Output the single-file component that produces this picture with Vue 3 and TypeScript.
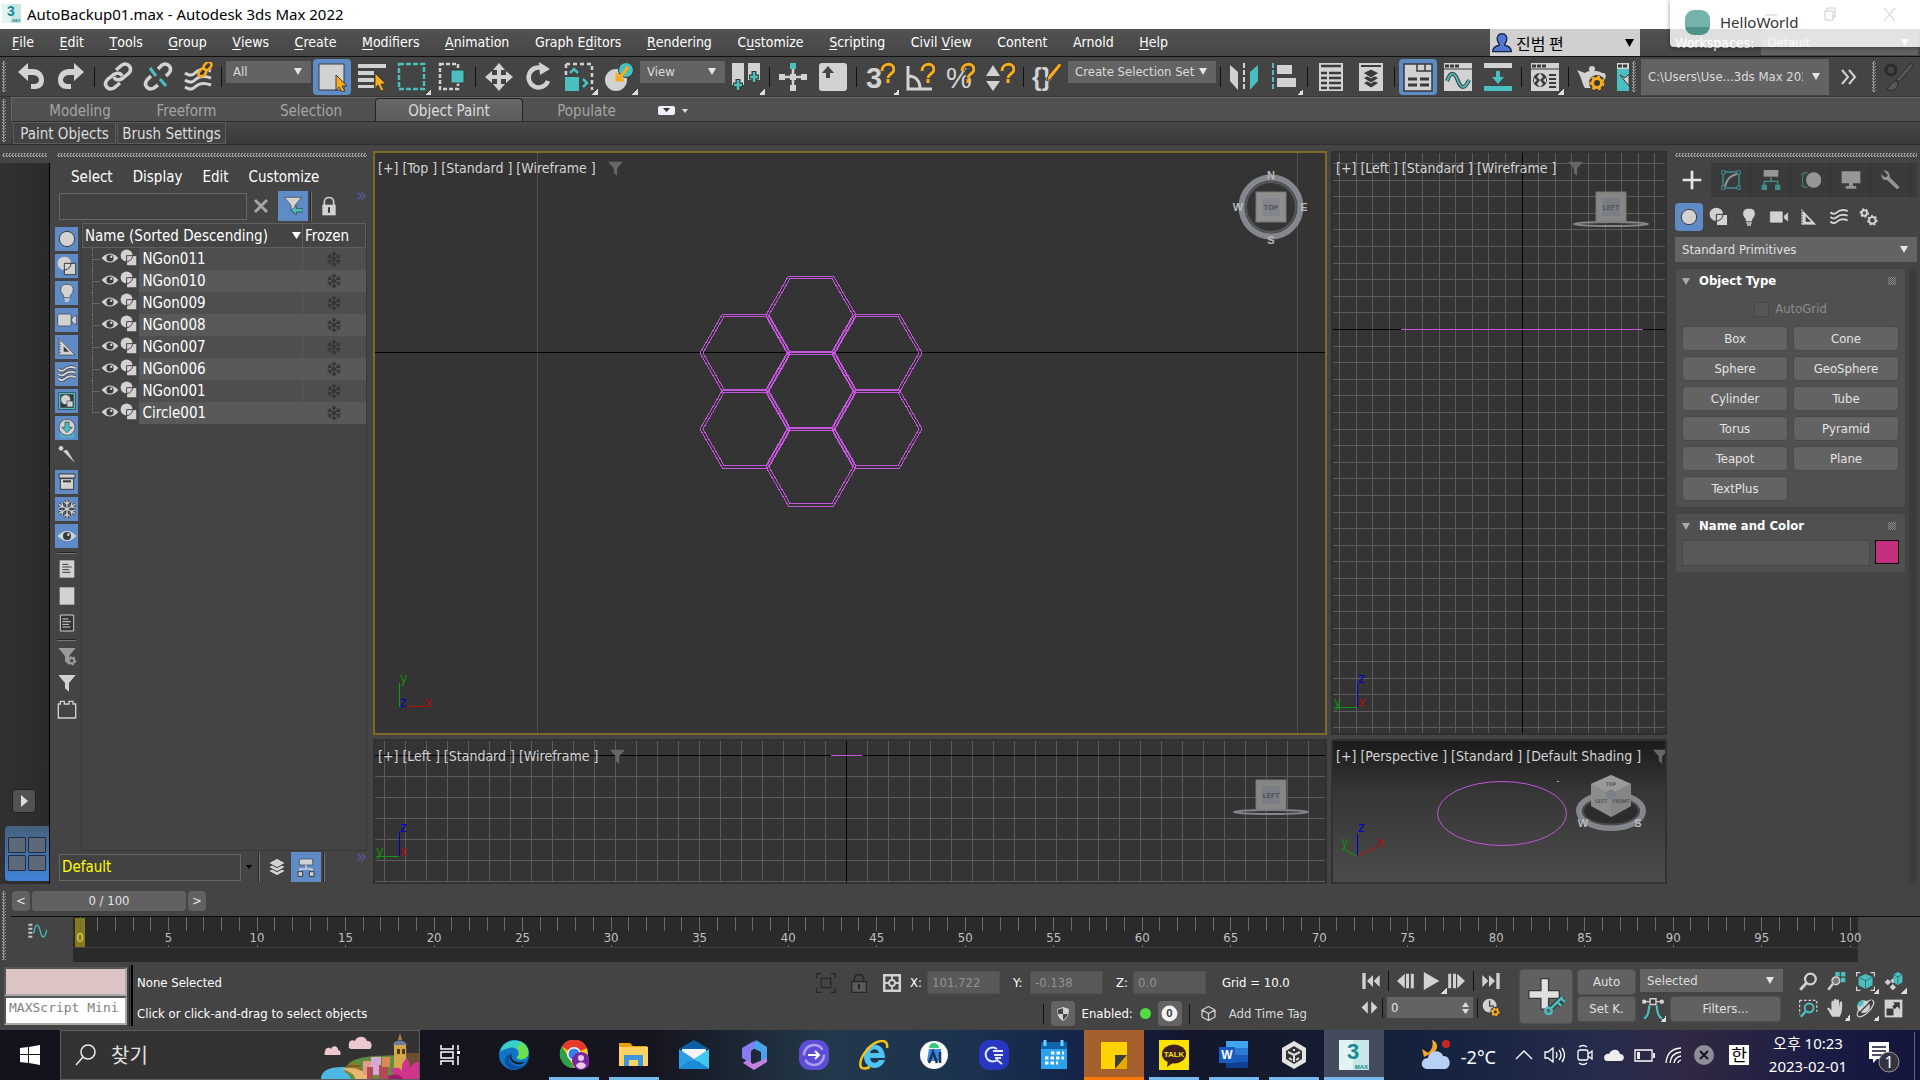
<script setup lang="ts">
import { computed, h, ref } from 'vue'
import type { FunctionalComponent } from 'vue'

const L = '#d2d2d2'
const T = '#49bfbf'
const Y = '#f9ac1c'
const D = '#3a3a3a'

const waves = (c: string) =>
  [8, 15, 22].map(y => `<path d="M2 ${y}c4 3 7 3 10 0s8-5 16-2" fill="none" stroke="${c}" stroke-width="3"/>`).join('')
const magnet = `<path d="M17 9c0-8 11-9 12-2 0 5-6 5-6 9" fill="none" stroke="${D}" stroke-width="5"/><path d="M17 9c0-8 11-9 12-2 0 5-6 5-6 9" fill="none" stroke="${Y}" stroke-width="3"/><path d="M23 17v4" stroke="${Y}" stroke-width="3"/>`
const gearAt = (x: number, y: number, r: number, c: string) =>
  `<circle cx="${x}" cy="${y}" r="${r}" fill="none" stroke="${c}" stroke-width="3"/><circle cx="${x}" cy="${y}" r="${r + 2}" fill="none" stroke="${c}" stroke-width="2" stroke-dasharray="3 3"/>`
const flake = (c: string, w: number) =>
  `<g fill="none" stroke="${c}" stroke-width="${w}">${[0, 60, 120, 180, 240, 300]
    .map(a => `<path transform="rotate(${a} 15 15)" d="M15 15V1M11 4l4 4 4-4"/>`).join('')}</g>`
const eye = `<path d="M1 15Q15 0 29 15Q15 30 1 15Z" fill="${L}"/><circle cx="15" cy="15" r="6" fill="${D}"/><circle cx="17" cy="13" r="2" fill="${L}"/>`
const shapes = `<circle cx="11" cy="11" r="10" fill="${L}"/><path d="M11 11h17v17H11z" fill="${L}" stroke="${D}" stroke-width="1.5"/><path d="M21 11a10 10 0 0 1-10 10" fill="none" stroke="${D}" stroke-width="1.5"/>`
const funnel = (c: string) => `<path d="M2 3h26L18 15v13l-6-5v-8Z" fill="${c}"/>`
const layers = (c: string) =>
  [21, 15, 9].map(y => `<path d="M15 ${y - 7}l13 7-13 7-13-7Z" fill="${c}" stroke="${D}" stroke-width="1.5"/>`).join('')
const tri = (x: number, dir: number) => `<path d="M${x} 15l${dir * 9} -9v18Z" fill="${L}"/>`

const icons: Record<string, string> = {
  undo: `<path d="M2 10l10-9v6h5c7 0 11 5 11 11s-4 9-9 9h-4v-5h3c3 0 5-2 5-4s-2-5-6-5h-5v6Z" fill="${L}"/>`,
  redo: `<path d="M28 10L18 1v6h-5C6 7 2 12 2 18s4 9 9 9h4v-5h-3c-3 0-5-2-5-4s2-5 6-5h5v6Z" fill="${L}"/>`,
  link: `<g fill="none" stroke="${L}" stroke-width="3.5"><path d="M13 8l6-5c6-3 11 3 7 8l-6 5c-4 3-8 2-9-1"/><path d="M17 21l-6 5c-6 3-11-3-7-8l6-5c4-3 8-2 9 1"/></g>`,
  unlink: `<g fill="none" stroke="${L}" stroke-width="3.5"><path d="M15 7l4-4c6-3 11 3 7 8l-3 3"/><path d="M15 23l-4 3c-6 3-11-3-7-8l4-4"/></g><path d="M7 6l6 8M17 17l6 7" stroke="${T}" stroke-width="3"/>`,
  bind: `<g transform="translate(0 3)">${waves(L)}</g><g fill="none" stroke="${D}" stroke-width="6"><path d="M19 12l6-7"/></g><g fill="none" stroke="${Y}" stroke-width="2.5"><rect x="15" y="8" width="9" height="6" rx="3" transform="rotate(-50 19 11)"/><rect x="21" y="1" width="9" height="6" rx="3" transform="rotate(-50 25 5)"/></g>`,
  select: `<path d="M2 2h25v26H2z" fill="${L}" stroke="${D}"/><path d="M19 13l11 11h-5l3 5-3 1-3-5-3 4Z" fill="${Y}" stroke="${D}"/>`,
  byname: `<path d="M1 2h28v4H1zM1 9h16v4H1zM1 16h16v4H1zM1 23h16v3H1z" fill="${L}"/><path d="M18 11l11 11h-5l3 6-3 1-3-6-3 4Z" fill="${Y}" stroke="${D}"/>`,
  rect: `<path d="M2 2h25v25H2z" fill="none" stroke="${T}" stroke-width="2.5" stroke-dasharray="5 2"/>`,
  window: `<path d="M3 2h18v25H3z" fill="none" stroke="${L}" stroke-width="2.5" stroke-dasharray="4 2"/><path d="M14 8h13v13H14z" fill="${T}" stroke="${D}"/>`,
  move: `<path d="M15 1l6 7h-4v5h5V9l7 6-7 6v-4h-5v5h4l-6 7-6-7h4v-5H8v4l-7-6 7-6v4h5V8H9Z" fill="${L}"/>`,
  rotate: `<path d="M24 19a10 10 0 1 1-6-13" fill="none" stroke="${L}" stroke-width="4.5"/><path d="M15 0l11 7-10 6Z" fill="${L}"/>`,
  scale: `<path d="M2 2h26v26" fill="none" stroke="${L}" stroke-width="2.5" stroke-dasharray="4 3"/><path d="M2 2v14" stroke="${L}" stroke-width="2.5" stroke-dasharray="4 3"/><path d="M1 15h14v14H1z" fill="${T}"/><path d="M6 11l4-4 4 4M19 17l4 4-4 4" fill="none" stroke="${T}" stroke-width="2.5"/>`,
  place: `<circle cx="12" cy="18" r="11" fill="${L}"/><circle cx="22" cy="8" r="7.5" fill="${T}" stroke="${D}"/><path d="M24 5l-9 12M13 11v7h7" stroke="${Y}" stroke-width="3" fill="none"/>`,
  pivot: `<path d="M1 1h12v22H1zM17 1h12v17H17z" fill="${L}"/><path d="M7 17v12M2 23h10M23 9v12M18 15h10" stroke="${D}" stroke-width="5"/><path d="M7 18v10M3 23h8M23 10v10M19 15h8" stroke="${T}" stroke-width="2.5"/>`,
  manip: `<path d="M15 5v20M4 15h22" stroke="${L}" stroke-width="2.5"/><path d="M1 12h6v6H1zM23 12h6v6h-6zM12 23h6v6h-6zM12 12h6v6h-6z" fill="${L}"/><path d="M12 1h6v6h-6z" fill="${T}"/>`,
  keyb: `<rect x="1" y="1" width="28" height="28" rx="3" fill="${L}"/><path d="M10 4l6 7h-4v5H8v-5H4Z" fill="#444"/>`,
  snap: `<text x="1" y="26" font-size="29" font-weight="bold" fill="${L}" font-family="Liberation Sans, sans-serif">3</text>${magnet}`,
  angle: `<path d="M3 4v23h24M3 14c8 0 12 5 12 13" fill="none" stroke="${L}" stroke-width="3"/>${magnet}`,
  percent: `<text x="1" y="26" font-size="29" fill="${L}" font-family="Liberation Sans, sans-serif">%</text>${magnet}`,
  spin: `<path d="M8 3l7 11H1zM8 29L1 19h14z" fill="${L}"/>${magnet}`,
  sets: `<text x="0" y="24" font-size="25" font-weight="bold" fill="${L}" font-family="Liberation Sans, sans-serif">{}</text><path d="M27 1l3 2-11 14-4 2 1-5Z" fill="${Y}" stroke="${D}"/>`,
  mirror: `<path d="M1 3l8 7v18l-8-9z" fill="${L}"/><path d="M29 3l-8 7v18l8-9z" fill="${T}"/><path d="M15 1v28" stroke="${L}" stroke-width="2" stroke-dasharray="5 2"/>`,
  align: `<path d="M4 1v28" stroke="${T}" stroke-width="2" stroke-dasharray="5 2"/><path d="M8 3h15v9H8zM8 16h19v9H8z" fill="${L}"/>`,
  list: `<path d="M3 1h24v28H3z" fill="${L}"/><path d="M5 4h20M5 11h6M13 11h12M5 16h6M13 16h12M5 21h6M13 21h12M5 26h6M13 26h12" stroke="${D}" stroke-width="2.5"/>`,
  stack: `<path d="M3 1h24v28H3z" fill="${L}"/><path d="M5 4h20" stroke="${D}" stroke-width="2"/>${[21, 16, 11].map(y => `<path d="M15 ${y - 4}l8 4-8 5-8-5Z" fill="${D}" stroke="${L}"/>`).join('')}`,
  ribbon: `<path d="M1 2h28v27H1z" fill="${L}" stroke="${D}" stroke-width="1.5"/><path d="M14 2v7h15M22 2v7" fill="none" stroke="${D}" stroke-width="1.5"/><path d="M5 17h9M17 17h9M5 23h9M17 23h9" stroke="${D}" stroke-width="3"/>`,
  curve: `<path d="M1 1h28v28H1z" fill="${L}"/><path d="M2 4h4M7 4h4M12 4h4" stroke="${D}" stroke-width="3"/><path d="M1 7h28" stroke="${D}"/><path d="M4 19c4-11 8-8 11 0s7 8 11-1" fill="none" stroke="${D}" stroke-width="4"/><path d="M4 19c4-11 8-8 11 0s7 8 11-1" fill="none" stroke="${T}" stroke-width="2"/>`,
  dope: `<path d="M1 1h28v5H1z" fill="${L}"/><path d="M1 24h28v5H1z" fill="${T}"/><path d="M13 9h4v6h4l-6 7-6-7h4z" fill="${T}"/>`,
  material: `<path d="M1 1h28v28H1z" fill="${L}"/><path d="M2 4h4M7 4h4M12 4h4" stroke="${D}" stroke-width="3"/><path d="M1 7h28" stroke="${D}"/><circle cx="10" cy="18" r="7" fill="${D}"/><path d="M10 11l3 4-3 3-3-3zM10 18l3 4-3 3-3-3zM4 16l3 2-3 3zM16 16l-3 2 3 3z" fill="${L}"/><path d="M19 13h7M19 17h7M19 21h7M19 25h7" stroke="${D}" stroke-width="2"/>`,
  teapot: `<path d="M0 8l8 3c3-3 13-3 17 0 5-1 5 6 0 9l-3 6H8C5 22 5 16 0 8Z" fill="${L}"/><circle cx="15" cy="7" r="3" fill="${L}"/><circle cx="20" cy="21" r="8" fill="${D}"/>${gearAt(20, 21, 4.5, Y)}`,
  frame: `<path d="M5 1h25v28H5z" fill="${L}"/><path d="M6 4h4M11 4h4" stroke="${D}" stroke-width="3"/><path d="M5 7h25v22H5z" fill="${T}"/><path d="M8 13l5 3 4-4v12z" fill="${L}" stroke="${D}"/>`,
  brush: `<g stroke="#2c2c2c" fill="#585858"><path d="M28 1l2 3-14 16-3-2z"/><path d="M13 19c-5 0-4 5-10 8 5 3 12 1 12-6z"/></g><circle cx="8" cy="8" r="5" fill="none" stroke="#2c2c2c" stroke-width="3"/>`,
  circle: `<circle cx="15" cy="15" r="11.5" fill="${L}" stroke="${D}" stroke-width="1.5"/>`,
  shapes,
  bulb: `<path d="M15 2c11 0 11 10 7 14-2 2-2 5-2 6H10c0-1 0-4-2-6C4 12 4 2 15 2Z" fill="${L}" stroke="${D}"/><path d="M11 24h8M12 27h6" stroke="${L}" stroke-width="2"/>`,
  camera: `<rect x="1" y="6" width="20" height="18" rx="2" fill="${L}" stroke="${D}"/><path d="M22 13l7-6v16l-7-6z" fill="${L}" stroke="${D}"/>`,
  ruler: `<path d="M3 2l24 25H3z" fill="${L}" stroke="${D}"/><path d="M10 14l8 8h-8z" fill="${D}"/><path d="M3 7h3M3 11h3M3 15h3M3 19h3M3 23h3" stroke="${D}"/>`,
  waves: waves(D).replace(/stroke-width="3"/g, 'stroke-width="5"') + waves(L),
  group: `<path d="M2 2h26v26H2z" fill="${D}"/><path d="M4 4h22v22H4z" fill="none" stroke="${T}" stroke-width="2"/><circle cx="13" cy="13" r="7" fill="${L}"/><path d="M15 15h9v9h-9z" fill="${L}" stroke="${D}"/>`,
  xref: `<circle cx="15" cy="14" r="12" fill="${L}" stroke="${D}"/><path d="M12 6h6v8h5l-8 8-8-8h5z" fill="${T}" stroke="${D}"/><path d="M6 22v6h18v-6" fill="none" stroke="${T}" stroke-width="2.5"/>`,
  bone: `<circle cx="6" cy="5" r="3.5" fill="${L}"/><path d="M9 9l6-2 12 20z" fill="${L}"/>`,
  box: `<path d="M3 3h24v6H3zM5 10h20v16H5z" fill="${L}" stroke="${D}" stroke-width="1.5"/><path d="M9 14h12" stroke="${D}" stroke-width="3"/>`,
  snow: `${flake(D, 5)}${flake(L, 2)}`,
  snowdark: flake('#333', 2.5),
  eye,
  doc: `<path d="M4 2h22v26H4z" fill="${L}"/><path d="M8 8h9M8 12h14M8 16h10M8 20h12" stroke="${D}" stroke-width="1.5"/>`,
  blank: `<path d="M4 2h22v26H4z" fill="${L}"/>`,
  docline: `<path d="M5 3h20v24H5z" fill="#333" stroke="${L}" stroke-width="1.5"/><path d="M8 9h9M8 13h13M8 17h10M8 21h12" stroke="${L}" stroke-width="1.5"/>`,
  fgear: `${funnel('#999')}${gearAt(22, 22, 4, '#999')}`,
  funnel: funnel(L),
  funneldim: funnel('#666'),
  brick: `<path d="M2 27V6h3V2h6v4h7V2h6v4h4v21z" fill="none" stroke="${L}" stroke-width="2"/>`,
  filterarrow: `<path d="M2 2h26L18 14v13l-6-5v-8Z" fill="${L}" stroke="${D}"/><path d="M12 21l8-6v4h10v5H20v4z" fill="${T}" stroke="${D}"/>`,
  lock: `<path d="M8 14V9c0-9 14-9 14 0v5" fill="none" stroke="${L}" stroke-width="2.5"/><path d="M5 13h20v16H5z" fill="${L}"/><path d="M15 17v8" stroke="${D}" stroke-width="3"/>`,
  lockdark: `<path d="M8 14V9c0-9 14-9 14 0v5" fill="none" stroke="#262626" stroke-width="2.5"/><path d="M4 13h22v16H4z" fill="#5a5a5a" stroke="#262626" stroke-width="2"/><path d="M15 17v7" stroke="#222" stroke-width="3"/>`,
  clear: `<path d="M5 5l20 20M25 5L5 25" stroke="#a5a5a5" stroke-width="5"/>`,
  layers: layers(L),
  tree: `<path d="M5 3h20v9H5z" fill="${L}" stroke="${D}"/><path d="M15 12v6M6 24v-6h18v6" fill="none" stroke="${L}" stroke-width="2"/><path d="M3 22h7v7H3zM20 22h7v7h-7z" fill="${L}" stroke="${D}" stroke-width="1.5"/>`,
  plus: `<path d="M15 1v28M1 15h28" stroke="#e6e6e6" stroke-width="4"/>`,
  modify: `<path d="M3 3h24v24H3z" fill="none" stroke="#3f8f90" stroke-width="2"/><path d="M1 1h5v5H1zM24 1h5v5h-5zM1 24h5v5H1zM24 24h5v5h-5z" fill="#3a3a3a" stroke="#3f8f90" stroke-width="1.5"/><path d="M6 25c2-11 8-17 18-19" fill="none" stroke="#969696" stroke-width="3"/>`,
  hierarchy: `<path d="M4 0h22v10H4z" fill="#969696"/><path d="M15 10v7M5 23v-6h20v6" fill="none" stroke="#3f8f90" stroke-width="2"/><path d="M1 22h8v8H1zM21 22h8v8h-8z" fill="#3f8f90"/>`,
  motion: `<g fill="none" stroke="#3f8f90" stroke-width="1.5"><path d="M10 3a13 13 0 0 0 0 24M6 3a13 13 0 0 0 0 24"/></g><circle cx="19" cy="15" r="11.5" fill="#969696"/>`,
  display: `<path d="M1 2h28v18H1zM12 20h6v4H12zM7 24h16v4H7z" fill="#969696"/>`,
  wrench: `<path d="M4 1l6 6-1 3-4 1-4-5c-1 6 3 10 8 9l15 14 4-3L13 11c1-6-4-11-9-10Z" fill="#969696"/>`,
  gears: `${gearAt(8, 9, 4, L)}${gearAt(20, 20, 5, L)}`,
  maxlogo: `<path d="M0 0h30v30H0z" fill="#c9e6e6"/><path d="M0 0h14v30H0z" fill="#e2f3f3"/><text x="8" y="19" font-size="22" font-weight="bold" fill="#138b90" font-family="Liberation Sans, sans-serif">3</text><text x="29" y="29" text-anchor="end" font-size="6" font-weight="bold" fill="#138b90" font-family="Liberation Sans, sans-serif">MAX</text>`,
  user: `<path d="M15 1c6 0 8 5 7 10-1 3-3 5-3 7 4 1 10 3 10 10H1c0-7 6-9 10-10 0-2-2-4-3-7-1-5 1-10 7-10Z" fill="#5177cf" stroke="#142246" stroke-width="2"/>`,
  start: `<path d="M2 3h5v24H2z" fill="${L}"/>${tri(9, 1)}${tri(19, 1)}`,
  end: `<path d="M23 3h5v24h-5z" fill="${L}"/>${tri(21, -1)}${tri(11, -1)}`,
  prev: `<path d="M0 15l13-12v24Z" fill="${L}"/><path d="M15 3h5v24h-5zM23 3h5v24h-5z" fill="${L}"/>`,
  next: `<path d="M30 15L17 3v24Z" fill="${L}"/><path d="M2 3h5v24H2zM10 3h5v24h-5z" fill="${L}"/>`,
  play: `<path d="M3 0l26 15L3 30Z" fill="${L}"/>`,
  keymode: `<path d="M1 15L12 4v22ZM29 15L18 4v22Z" fill="${L}"/>`,
  clock: `<circle cx="12" cy="12" r="11" fill="${L}"/><path d="M12 4v9h7" fill="none" stroke="${D}" stroke-width="2"/><circle cx="21" cy="22" r="8" fill="${D}"/>${gearAt(21, 22, 4, Y)}`,
  bigkey: `<path d="M14 0v25M1 13h25" stroke="${D}" stroke-width="7"/><path d="M14 1v23M2 13h23" stroke="#e0e0e0" stroke-width="5"/><path d="M28 15L18 25M24 19l3 3M27 16l3 3" stroke="${D}" stroke-width="4"/><path d="M28 15L18 25M24 19l3 3M27 16l3 3" stroke="${T}" stroke-width="2"/><circle cx="17" cy="26" r="2.5" fill="none" stroke="${T}" stroke-width="2"/>`,
  tangent: `<path d="M4 5h7M19 5h7" stroke="${L}" stroke-width="1.5"/><circle cx="3" cy="5" r="3" fill="${L}"/><circle cx="27" cy="5" r="3" fill="${L}"/><path d="M11 1h8v8h-8z" fill="${D}" stroke="${L}" stroke-width="2"/><path d="M3 28c6-4 6-10 7-18M27 28c-6-4-6-10-7-18" fill="none" stroke="${T}" stroke-width="3"/>`,
  zoom: `<circle cx="18" cy="11" r="8.5" fill="none" stroke="${L}" stroke-width="3.5"/><path d="M12 17L2 28" stroke="${L}" stroke-width="4.5"/>`,
  zoomall: `<path d="M13 0h7v7h-7zM22 0h7v7h-7zM22 9h7v7h-7z" fill="${T}"/><circle cx="14" cy="14" r="6" fill="#777" stroke="${L}" stroke-width="2.5"/><path d="M9 19L2 28" stroke="${L}" stroke-width="4"/>`,
  extents: `<path d="M1 7V1h6M23 1h6v6M29 23v6h-6M7 29H1v-6" fill="none" stroke="${L}" stroke-width="2"/><path d="M15 3l11 5v13l-11 6-11-6V8Z" fill="${T}"/><path d="M4 8l11 6 11-6M15 14v13" fill="none" stroke="${D}"/>`,
  extall: `<path d="M6 11l5 5-5 5-5-5zM14 19l5 5-5 5-5-5zM14 10l4 4-4 4-4-4z" fill="${L}"/><path d="M22 0l7 4v12l-7 5-7-5V4Z" fill="${T}"/><path d="M15 4l7 4 7-4M22 8v12" fill="none" stroke="${D}"/>`,
  region: `<path d="M1 2h27v18M1 2v22" fill="none" stroke="${L}" stroke-width="2" stroke-dasharray="4 3"/><circle cx="16" cy="14" r="7" fill="none" stroke="${T}" stroke-width="3"/><path d="M11 19L3 28" stroke="${T}" stroke-width="4"/>`,
  hand: `<path d="M8 28C4 22 3 18 0 15c2-3 5 0 7 3V5c0-3 4-3 4 0v8V2c0-3 4-3 4 0v11V3c0-3 4-3 4 0v11l1-8c1-3 4-2 4 0 0 8 0 16-4 22Z" fill="${L}"/>`,
  orbit: `<circle cx="12" cy="12" r="10" fill="${L}"/><path d="M12 2v10H2a10 10 0 0 1 10-10" fill="${T}"/><ellipse cx="15" cy="15" rx="17" ry="7" transform="rotate(-45 15 15)" fill="none" stroke="${L}" stroke-width="2"/><path d="M3 24l22-22" stroke="${D}" stroke-width="2"/>`,
  maximize: `<path d="M1 1h28v28H1z" fill="${L}"/><path d="M4 15h11v11H4z" fill="${D}"/><path d="M14 5h11v11l-4-4-4 4-4-4 4-4z" fill="${D}"/>`,
  selbox: `<g fill="none" stroke="#272727" stroke-width="2"><path d="M8 8h14v14H8zM1 8V1h7M22 1h7v7M29 22v7h-7M8 29H1v-7"/></g>`,
  absolute: `<path d="M2 2h26v26H2z" fill="none" stroke="${L}" stroke-width="4"/><circle cx="15" cy="15" r="5" fill="none" stroke="${L}" stroke-width="3"/><path d="M15 3v7M15 20v7M3 15h7M20 15h7" stroke="${L}" stroke-width="3"/>`,
  shield: `<path d="M15 1l12 4c0 12-3 19-12 24C6 24 3 17 3 5Z" fill="${L}" stroke="#333"/><path d="M15 4v11H6L5 7zM15 15h9c-2 6-5 9-9 11z" fill="#444"/>`,
  zero: `<circle cx="15" cy="15" r="14" fill="#f1f1f1"/><text x="15" y="22" text-anchor="middle" font-size="20" font-weight="bold" fill="#3a3a3a" font-family="Liberation Sans, sans-serif">0</text>`,
  cube: `<path d="M15 1l13 7v14l-13 7-13-7V8ZM2 8l13 7 13-7M15 15v14" fill="none" stroke="${L}" stroke-width="2.5"/>`,
  minicurve: `<path d="M2 4h6M2 10h6M2 16h6M2 22h6" stroke="#c4c4c4" stroke-width="3"/><path d="M10 17C13 1 17 1 20 14s7 10 10-3" fill="none" stroke="${T}" stroke-width="2"/>`,
}

const Icon: FunctionalComponent<{ name: string; size?: number }> = p =>
  h('svg', { width: p.size ?? 30, height: p.size ?? 30, viewBox: '0 0 30 30', 'aria-hidden': 'true', style: 'display:block;flex:none', innerHTML: icons[p.name] })
Icon.props = ['name', 'size']

const menus = ['_File', '_Edit', '_Tools', '_Group', '_Views', '_Create', '_Modifiers', '_Animation', 'Graph E_ditors', '_Rendering', 'C_ustomize', '_Scripting', 'Civil _View', 'Content', 'Arnold', '_Help']
const menuParts = menus.map(m => {
  const i = m.indexOf('_')
  return i < 0 ? ['', '', m] : [m.slice(0, i), m[i + 1], m.slice(i + 2)]
})

interface Tool { k: 'i' | 's' | 'c'; n?: string; on?: boolean; fly?: boolean; w?: number }
const tools: Tool[] = [
  { k: 'i', n: 'undo' }, { k: 'i', n: 'redo' }, { k: 's' },
  { k: 'i', n: 'link' }, { k: 'i', n: 'unlink' }, { k: 'i', n: 'bind' }, { k: 's' },
  { k: 'c', n: 'All', w: 85 },
  { k: 'i', n: 'select', on: true }, { k: 'i', n: 'byname' }, { k: 'i', n: 'rect', fly: true }, { k: 'i', n: 'window' }, { k: 's' },
  { k: 'i', n: 'move' }, { k: 'i', n: 'rotate' }, { k: 'i', n: 'scale', fly: true }, { k: 'i', n: 'place', fly: true },
  { k: 'c', n: 'View', w: 85 },
  { k: 'i', n: 'pivot', fly: true }, { k: 's' }, { k: 'i', n: 'manip' }, { k: 'i', n: 'keyb' }, { k: 's' },
  { k: 'i', n: 'snap', fly: true }, { k: 'i', n: 'angle' }, { k: 'i', n: 'percent' }, { k: 'i', n: 'spin' }, { k: 's' },
  { k: 'i', n: 'sets' }, { k: 'c', n: 'Create Selection Set', w: 148 }, { k: 's' },
  { k: 'i', n: 'mirror' }, { k: 'i', n: 'align', fly: true }, { k: 's' },
  { k: 'i', n: 'list' }, { k: 'i', n: 'stack' }, { k: 's' },
  { k: 'i', n: 'ribbon', on: true }, { k: 'i', n: 'curve' }, { k: 'i', n: 'dope' }, { k: 's' },
  { k: 'i', n: 'material', fly: true }, { k: 's' }, { k: 'i', n: 'teapot' },
]

const ribbonTabs = ['Modeling', 'Freeform', 'Selection', 'Object Paint', 'Populate']
const activeTab = ref('Object Paint')

const filters = ['circle', 'shapes', 'bulb', 'camera', 'ruler', 'waves', 'group', 'xref', 'bone', 'box', 'snow', 'eye']
const nodes = ['NGon011', 'NGon010', 'NGon009', 'NGon008', 'NGon007', 'NGon006', 'NGon001', 'Circle001']
const panelTabs = ['plus', 'modify', 'hierarchy', 'motion', 'display', 'wrench']
const categories = ['circle', 'shapes', 'bulb', 'camera', 'ruler', 'waves', 'gears']
const primitives = ['Box', 'Cone', 'Sphere', 'GeoSphere', 'Cylinder', 'Tube', 'Torus', 'Pyramid', 'Teapot', 'Plane', 'TextPlus']
const frames = Array.from({ length: 101 }, (_, i) => i)
const coords = [['X', '101.722'], ['Y', '-0.138'], ['Z', '0.0']]
const navIcons = ['zoom', 'zoomall', 'extents', 'extall', 'region', 'hand', 'orbit', 'maximize']
const navFly = ['extents', 'extall', 'hand', 'orbit']

const hexPoints = (cx: number, cy: number, r: number) =>
  Array.from({ length: 6 }, (_, i) => {
    const a = (i * Math.PI) / 3
    return `${(cx + r * Math.cos(a)).toFixed(1)},${(cy + r * Math.sin(a)).toFixed(1)}`
  }).join(' ')
const hexagons = computed(() =>
  [[0, 0], [0, -76], [0, 76], [-66, -38], [66, -38], [-66, 38], [66, 38]].flatMap(([dx, dy]) =>
    [45, 42].map(r => hexPoints(436 + dx, 238 + dy, r))))

const lines = (start: number, step: number, n: number) =>
  Array.from({ length: n }, (_, i) => Math.round(start + step * i) + 0.5)
const sideV = lines(6, 16.6, 80)
const sideH = lines(10, 16.6, 80)
const lowV = lines(9, 21, 120)
const lowH = lines(14, 21, 30)

const pinned = ['edge', 'chrome', 'folder', 'mail', 'm365', 'arrow', 'ie', 'studio', 'finder', 'calendar', 'sticky', 'talk', 'word', 'unity', 'max']
const running = ['chrome', 'folder', 'talk', 'word', 'unity', 'max', 'sticky']
const appIcons: Record<string, string> = {
  edge: `<circle cx="15" cy="15" r="15" fill="#1174c9"/><path d="M1 12C3 2 14-2 23 2c8 4 9 14 2 17-4 1-8 0-7-2 5-5-1-11-8-9-5 1-8 3-9 4Z" fill="#3bd0c4"/><path d="M22 2c8 4 10 14 3 17-4 1-8 0-7-2 3-3 2-7 0-8Z" fill="#6adf4f"/><path d="M11 14c-4 8 4 15 16 11-6 6-14 6-19 1-4-4-3-10 3-12Z" fill="#0c4f9c"/><path d="M13 13c-3 5 2 11 13 9l-3 2c-8 2-14-4-12-9Z" fill="#15202e"/>`,
  chrome: `<circle cx="15" cy="14" r="14" fill="#fbc116"/><path d="M15 14L3 6.500A14 14 0 0 1 28 8Z" fill="#e33b2e"/><path d="M3 6.500L11 20l4 8A14 14 0 0 1 3 6.500Z" fill="#2aa24c"/><circle cx="15" cy="14" r="7" fill="#fff"/><circle cx="15" cy="14" r="5.500" fill="#3b7de9"/><circle cx="22" cy="21" r="9" fill="#7a259e"/><circle cx="22" cy="18" r="3" fill="#e6cdf0"/><path d="M17 26c1-5 9-5 10 0-3 4-7 4-10 0Z" fill="#e6cdf0"/>`,
  folder: `<path d="M0 3h11l3 3h14v7H0Z" fill="#e8a100"/><path d="M0 7h29v19H0Z" fill="#ffd261"/><path d="M5 26V15h19v11h-5v-6h-9v6Z" fill="#3c97dd"/>`,
  mail: `<path d="M0 9L15 0l15 9Z" fill="#0b5fa9"/><path d="M3 9h24v12H3Z" fill="#f5f5f5"/><path d="M0 9l15 10L0 29Z" fill="#2a9be4"/><path d="M30 9L15 19l15 10Z" fill="#41c8f2"/><path d="M0 29l15-10 15 10Z" fill="#1d8bdc"/>`,
  m365: `<path d="M15 1l6 3-9 7v12l-9-5V8Z" fill="#8a7bf0"/><path d="M17 0l11 7v14l-6 3V12l-8-4Z" fill="#4ca3ec"/><path d="M8 20l6 4 14-6v4l-13 8-11-7Z" fill="#c181e0"/>`,
  arrow: `<rect width="30" height="30" rx="11" fill="#5c4cd6"/><circle cx="15" cy="15" r="10" fill="none" stroke="#a99ff5" stroke-width="2.500" stroke-dasharray="26 5"/><path d="M9 15h11M16 11l4 4-4 4" fill="none" stroke="#fff" stroke-width="2"/>`,
  ie: `<path d="M26 18H11c1 6 7 6 9 2h6c-4 12-21 10-21-4C5 1 26 0 26 18ZM11 13h9c-1-5-8-5-9 0Z" fill="#4dc4f5"/><path d="M28 8C30-3 16 0 8 10c-8 9-11 23 3 17" fill="none" stroke="#f3c11c" stroke-width="2.500"/>`,
  studio: `<circle cx="15" cy="15" r="14" fill="#fafafa"/><path d="M10 9h12v12H8z" fill="#3686e8"/><path d="M10 8a5 5 0 0 1 10 0Z" fill="#32c87e"/><path d="M10 23l4-11 4 11M21 12v11" fill="none" stroke="#1d3551" stroke-width="2.500"/>`,
  finder: `<rect width="30" height="30" rx="10" fill="#2737c2"/><path d="M18 9a7 7 0 1 0 0 11l5 4M14 11h10M15 15h9M16 18h6" fill="none" stroke="#e6eaff" stroke-width="2"/>`,
  calendar: `<path d="M2 2h26v8H2Z" fill="#1163ab"/><path d="M2 9h26v20H2Z" fill="#2aa3ec"/><path d="M6 0v6M23 0v6" stroke="#6dd2f8" stroke-width="3"/><path d="M12 13h13M6 18h19M6 23h13" stroke="#fff" stroke-width="3" stroke-dasharray="3.500 2"/>`,
  sticky: `<path d="M2 2h26v15L16 29H2Z" fill="#ffd200"/><path d="M16 29V15h12Z" fill="#3c3d3a"/><path d="M16 29l12-13v13Z" fill="#e8a800"/>`,
  talk: `<rect width="30" height="30" fill="#fbe300"/><ellipse cx="15" cy="14" rx="12" ry="9.500" fill="#3a2021"/><path d="M9 20l-1 7 7-5Z" fill="#3a2021"/><text x="15" y="17" text-anchor="middle" font-size="8" font-weight="bold" fill="#fbe300" font-family="Liberation Sans, sans-serif">TALK</text>`,
  word: `<path d="M7 1h22v7H7Z" fill="#41a5ee"/><path d="M7 8h22v7H7Z" fill="#2b7cd3"/><path d="M7 15h22v7H7Z" fill="#185abd"/><path d="M7 22h22v6H7Z" fill="#103f91"/><path d="M0 7h16v16H0Z" fill="#185abd"/><text x="8" y="19" text-anchor="middle" font-size="12" font-weight="bold" fill="#fff" font-family="Liberation Sans, sans-serif">W</text>`,
  unity: `<path d="M15 1l12 7v14l-12 7-12-7V8Z" fill="#e3e3e3"/><path d="M15 6l8 5v8l-8 5-8-5v-8Z" fill="#333"/><path d="M15 15l-6-3M15 15l6-3M15 15v7M10 18l3 2M20 18l-3 2M15 9v2" stroke="#ddd" stroke-width="2"/>`,
  max: icons.maxlogo,
}
</script>

<template>
  <div class="app">
    <header>
      <div class="titlebar">
        <Icon name="maxlogo" :size="19" />
        <h1>AutoBackup01.max - Autodesk 3ds Max 2022</h1>
      </div>
      <div class="menubar">
        <nav class="menus">
          <button v-for="(m, i) in menuParts" :key="i" type="button">{{ m[0] }}<u>{{ m[1] }}</u>{{ m[2] }}</button>
        </nav>
        <div class="user">
          <Icon name="user" :size="20" />
          <select aria-label="Account"><option>진범 편</option></select>
          <svg width="9" height="8"><path d="M0 0h9L4.500 8z" fill="#000" /></svg>
        </div>
        <label class="workspace">Workspaces:
          <span class="combo"><select><option>Default</option></select><i></i></span>
        </label>
      </div>

      <div class="toolbar">
        <span class="grip tall"></span>
        <div class="tools">
          <template v-for="(t, i) in tools" :key="i">
            <span v-if="t.k === 's'" class="sep"></span>
            <button v-else-if="t.k === 'i'" type="button" class="tool" :class="{ on: t.on, fly: t.fly }" :aria-label="t.n"><Icon :name="t.n!" /></button>
            <span v-else class="combo" :style="{ width: t.w + 'px' }"><select :aria-label="t.n"><option>{{ t.n }}</option></select><i></i></span>
          </template>
          <button type="button" class="partial" aria-label="Rendered frame window"><Icon name="frame" /></button>
        </div>
        <span class="grip tall"></span>
        <span class="combo path"><select aria-label="Project folder"><option>C:\Users\Use...3ds Max 2022</option></select><i></i></span>
        <button type="button" class="more" aria-label="More tools">
          <svg width="16" height="16"><path d="M1 1l6 7-6 7M8 1l6 7-6 7" fill="none" stroke="#d2d2d2" stroke-width="2" /></svg>
        </button>
        <span class="grip tall"></span>
        <button type="button" class="brush" aria-label="Brush"><Icon name="brush" /></button>
      </div>

      <div class="ribbon">
        <span class="grip tall"></span>
        <div class="ribbon-body">
          <div class="tabs">
            <button v-for="t in ribbonTabs" :key="t" type="button" :class="{ active: t === activeTab }" @click="activeTab = t">{{ t }}</button>
            <button type="button" class="minimize" aria-label="Minimize ribbon">
              <svg width="30" height="10"><rect width="17" height="9" rx="2" fill="#eef1f7" /><path d="M5 2h7l-3.500 4z" fill="#333" /><path d="M24 3h6l-3 4z" fill="#ddd" /></svg>
            </button>
          </div>
          <div class="panels">
            <button type="button">Paint Objects</button>
            <button type="button">Brush Settings</button>
          </div>
        </div>
      </div>
    </header>

    <main>
      <aside class="strip">
        <span class="grip wide"></span>
        <div class="strip-body">
          <button type="button" class="expand" aria-label="Expand"><svg width="8" height="12"><path d="M0 0l7 6-7 6z" fill="#ddd" /></svg></button>
          <button type="button" class="layout" aria-label="Viewport layout"><i></i><i></i><i></i><i></i></button>
        </div>
      </aside>

      <aside class="explorer">
        <span class="grip wide"></span>
        <nav class="ex-menu"><button v-for="m in ['Select', 'Display', 'Edit', 'Customize']" :key="m" type="button">{{ m }}</button></nav>
        <div class="ex-search">
          <input type="text" aria-label="Find" />
          <button type="button" class="clear" aria-label="Clear"><Icon name="clear" :size="18" /></button>
          <button type="button" class="blue" aria-label="Filter"><Icon name="filterarrow" :size="20" /></button>
          <span class="vline"></span>
          <button type="button" class="lock" aria-label="Lock"><Icon name="lock" :size="20" /></button>
          <span class="chev">»</span>
        </div>
        <div class="ex-body">
          <div class="ex-tools">
            <button v-for="f in filters" :key="f" type="button" :class="{ blue: f !== 'bone' }" :aria-label="f"><Icon :name="f" :size="20" /></button>
            <hr />
            <button v-for="f in ['doc', 'blank', 'docline']" :key="f" type="button" :aria-label="f"><Icon :name="f" :size="20" /></button>
            <hr />
            <button v-for="f in ['fgear', 'funnel', 'brick']" :key="f" type="button" :aria-label="f"><Icon :name="f" :size="20" /></button>
          </div>
          <div class="ex-list">
            <table>
              <colgroup><col class="c-name" /><col class="c-frozen" /></colgroup>
              <thead>
                <tr>
                  <th><div class="th">Name (Sorted Descending)<svg width="9" height="7"><path d="M0 0h9L4.500 7z" fill="#fff" /></svg></div></th>
                  <th><div class="th">Frozen</div></th>
                </tr>
              </thead>
              <tbody>
                <tr v-for="n in nodes" :key="n">
                  <td><div class="node"><span class="twig"></span><Icon name="eye" :size="18" /><Icon name="shapes" :size="18" /><span class="name">{{ n }}</span></div></td>
                  <td class="frozen"><div><Icon name="snowdark" :size="16" /></div></td>
                </tr>
              </tbody>
            </table>
          </div>
        </div>
        <div class="ex-foot">
          <input type="text" value="Default" aria-label="Layer" />
          <svg class="caret" width="6" height="4"><path d="M0 0h6L3 4z" fill="#000" /></svg>
          <span class="vline"></span>
          <button type="button" class="plain" aria-label="Layers"><Icon name="layers" :size="20" /></button>
          <button type="button" class="blue" aria-label="Hierarchy"><Icon name="tree" :size="20" /></button>
          <span class="vline"></span>
          <span class="chev">»</span>
        </div>
      </aside>

      <div class="viewports">
        <section class="viewport active">
          <svg class="canvas">
            <g stroke="#4e4e4e"><line x1="162.500" x2="162.500" y1="0" y2="100%" /><line x1="922.500" x2="922.500" y1="0" y2="100%" /></g>
            <line x1="0" x2="100%" y1="199.500" y2="199.500" stroke="#000" />
            <polygon v-for="(p, i) in hexagons" :key="i" :points="p" fill="none" stroke="#c455dc" shape-rendering="crispEdges" />
          </svg>
          <p class="vlabel">[+] [Top ] [Standard ] [Wireframe ]<Icon name="funneldim" :size="17" /></p>
          <svg class="viewcube" viewBox="0 0 80 80">
            <circle cx="40" cy="40" r="29.500" fill="none" stroke="#84878d" stroke-width="6" /><circle cx="40" cy="40" r="25" fill="none" stroke="#55585c" stroke-width="2" />
            <rect x="25" y="25" width="30" height="30" fill="#8f8f8f" stroke="#777" /><rect x="31" y="31" width="18" height="18" fill="#84868e" />
            <text x="40" y="43" font-size="7">TOP</text>
            <g class="compass"><text x="40" y="12">N</text><text x="40" y="77">S</text><text x="7" y="44">W</text><text x="73" y="44">E</text></g>
          </svg>
          <svg class="axis" viewBox="0 0 60 60"><path d="M24.500 54V30" stroke="#0f9a0f" /><path d="M29 53.500h23" stroke="#b00c0c" /><text x="25" y="30" fill="#0f8f0f">y</text><text x="50" y="54" fill="#b00c0c">x</text><text x="25" y="54" fill="#0000c8">z</text></svg>
        </section>

        <section class="viewport">
          <svg class="canvas">
            <g stroke="#5c5c5c"><line v-for="x in sideV" :key="x" :x1="x" :x2="x" y1="0" y2="100%" /></g>
            <g stroke="#5c5c5c"><line v-for="y in sideH" :key="y" x1="0" x2="100%" :y1="y" :y2="y" /></g>
            <line x1="189.500" x2="189.500" y1="0" y2="100%" stroke="#000" /><line x1="0" x2="100%" y1="176.500" y2="176.500" stroke="#000" />
            <line x1="68" x2="310" y1="176.500" y2="176.500" stroke="#c455dc" />
          </svg>
          <p class="vlabel">[+] [Left ] [Standard ] [Wireframe ]<Icon name="funneldim" :size="17" /></p>
          <svg class="viewcube" viewBox="0 0 80 80">
            <ellipse cx="40" cy="57" rx="37" ry="2" fill="none" stroke="#84878d" stroke-width="2" /><rect x="25" y="25" width="30" height="30" fill="#868686" stroke="#777" /><rect x="31" y="31" width="18" height="18" fill="#7b7d84" />
            <text x="40" y="43" font-size="7">LEFT</text>
          </svg>
          <svg class="axis" viewBox="0 0 60 60"><path d="M24.500 54V30" stroke="#0000c8" /><path d="M1 54.500h23" stroke="#0f9a0f" /><text x="25" y="30" fill="#0000c8">z</text><text x="1" y="54" fill="#0f8f0f">y</text><text x="25" y="54" fill="#b00c0c">x</text></svg>
        </section>

        <section class="viewport">
          <svg class="canvas">
            <g stroke="#5c5c5c"><line v-for="x in lowV" :key="x" :x1="x" :x2="x" y1="0" y2="100%" /></g>
            <g stroke="#5c5c5c"><line v-for="y in lowH" :key="y" x1="0" x2="100%" :y1="y" :y2="y" /></g>
            <line x1="471.500" x2="471.500" y1="0" y2="100%" stroke="#000" /><line x1="0" x2="100%" y1="14.500" y2="14.500" stroke="#000" />
            <line x1="456" x2="487" y1="14.500" y2="14.500" stroke="#c455dc" />
          </svg>
          <p class="vlabel">[+] [Left ] [Standard ] [Wireframe ]<Icon name="funneldim" :size="17" /></p>
          <svg class="viewcube" viewBox="0 0 80 80">
            <ellipse cx="40" cy="57" rx="37" ry="2" fill="none" stroke="#84878d" stroke-width="2" /><rect x="25" y="25" width="30" height="30" fill="#868686" stroke="#777" /><rect x="31" y="31" width="18" height="18" fill="#7b7d84" />
            <text x="40" y="43" font-size="7">LEFT</text>
          </svg>
          <svg class="axis" viewBox="0 0 60 60"><path d="M24.500 54V30" stroke="#0000c8" /><path d="M1 54.500h23" stroke="#0f9a0f" /><text x="25" y="30" fill="#0000c8">z</text><text x="1" y="54" fill="#0f8f0f">y</text><text x="25" y="54" fill="#b00c0c">x</text></svg>
        </section>

        <section class="viewport persp">
          <svg class="canvas"><ellipse cx="169" cy="72.500" rx="64.500" ry="32" fill="none" stroke="#c455dc" /><path d="M224 40.500h2" stroke="#e29af0" /></svg>
          <p class="vlabel">[+] [Perspective ] [Standard ] [Default Shading ]<Icon name="funneldim" :size="17" /></p>
          <svg class="viewcube" viewBox="0 0 80 80">
            <ellipse cx="40" cy="56" rx="32" ry="17" fill="#2c2c2c" stroke="#84878d" stroke-width="6" /><ellipse cx="40" cy="56" rx="28" ry="13.500" fill="none" stroke="#4a4c50" stroke-width="2" />
            <path d="M40 20l20 9v22L40 62 20 51V29Z" fill="#8c8c8c" /><path d="M20 29l20 10 20-10-20-9Z" fill="#9a9a9a" /><path d="M40 39l20-10v22L40 62Z" fill="#858585" />
            <path d="M35 37l5-3 5 3v5l-5 3-5-3Z" fill="#7d8086" />
            <text x="30" y="48" font-size="5">LEFT</text><text x="50" y="48" font-size="5">FRONT</text><text x="40" y="31" font-size="5">TOP</text>
            <g class="compass"><text x="12" y="72">W</text><text x="67" y="72">S</text></g>
          </svg>
          <svg class="axis" viewBox="0 0 60 60"><path d="M24.500 54V32" stroke="#0000c8" /><path d="M25 54l19-9" stroke="#c80c0c" /><path d="M24 54l-14-7" stroke="#0f9a0f" /><text x="25" y="30" fill="#0000c8">z</text><text x="8" y="45" fill="#0f8f0f">y</text><text x="44" y="45" fill="#b00c0c">x</text></svg>
        </section>
      </div>

      <aside class="command">
        <span class="grip wide"></span>
        <div class="cmd-tabs"><button v-for="(p, i) in panelTabs" :key="p" type="button" :class="{ active: i === 0 }" :aria-label="p"><Icon :name="p" :size="20" /></button></div>
        <div class="cats"><button v-for="(c, i) in categories" :key="c" type="button" :class="{ blue: i === 0 }" :aria-label="c"><Icon :name="c" :size="20" /></button></div>
        <span class="combo prim"><select aria-label="Category"><option>Standard Primitives</option></select><i></i></span>
        <div class="rolls">
          <div class="roll-col">
            <section class="roll">
              <h2><svg width="8" height="7"><path d="M0 0h8L4 7z" fill="#aaa" /></svg>Object Type<span class="dots"></span></h2>
              <label class="autogrid"><input type="checkbox" disabled />AutoGrid</label>
              <div class="prims"><button v-for="p in primitives" :key="p" type="button">{{ p }}</button></div>
            </section>
            <section class="roll">
              <h2><svg width="8" height="7"><path d="M0 0h8L4 7z" fill="#aaa" /></svg>Name and Color<span class="dots"></span></h2>
              <div class="namecolor"><input type="text" aria-label="Object name" /><button type="button" aria-label="Object color"></button></div>
            </section>
          </div>
          <span class="scroll"></span>
        </div>
      </aside>
    </main>

    <div class="timeline">
      <span class="grip tall"></span>
      <div class="tl-body">
        <div class="slider"><button type="button">&lt;</button><button type="button" class="thumb">0 / 100</button><button type="button">&gt;</button></div>
        <div class="track-row">
          <button type="button" class="mini" aria-label="Mini curve editor"><Icon name="minicurve" :size="20" /></button>
          <div class="track">
            <div class="ticks">
              <div v-for="f in frames" :key="f" class="tick" :class="{ zero: f === 0 }"><b></b><template v-if="f % 5 === 0"><span>{{ f }}</span><b class="tail"></b></template></div>
            </div>
          </div>
        </div>
      </div>
    </div>

    <div class="status">
      <div class="listener"><input type="text" class="pink" aria-label="Macro recorder" /><input type="text" value="MAXScript Mini" aria-label="MAXScript Mini Listener" /></div>
      <span class="bar"></span>
      <div class="prompt"><p>None Selected</p><p>Click or click-and-drag to select objects</p></div>
      <div class="coords">
        <div class="crow">
          <Icon name="selbox" :size="20" /><Icon name="lockdark" :size="20" /><Icon name="absolute" :size="18" />
          <label v-for="c in coords" :key="c[0]"><span>{{ c[0] }}:</span><input type="text" :value="c[1]" /></label>
          <span class="grid">Grid = 10.0</span>
        </div>
        <div class="crow second">
          <span class="vsep"></span><button type="button" class="sq" aria-label="Security"><Icon name="shield" :size="16" /></button>
          <span>Enabled:</span><i class="green"></i><button type="button" class="sq" aria-label="Messages"><Icon name="zero" :size="17" /></button><span class="vsep"></span>
          <Icon name="cube" :size="15" /><span class="tag">Add Time Tag</span>
        </div>
      </div>
      <div class="playback">
        <div class="prow">
          <button type="button" aria-label="Start"><Icon name="start" :size="20" /></button><span class="vsep"></span>
          <button type="button" aria-label="Previous"><Icon name="prev" :size="18" /></button>
          <button type="button" class="fly" aria-label="Play"><Icon name="play" :size="18" /></button>
          <button type="button" aria-label="Next"><Icon name="next" :size="18" /></button><span class="vsep"></span>
          <button type="button" aria-label="End"><Icon name="end" :size="20" /></button>
        </div>
        <div class="prow">
          <button type="button" aria-label="Key mode"><Icon name="keymode" :size="17" /></button><span class="vsep"></span>
          <span class="frame"><input type="text" value="0" aria-label="Frame" /><svg width="7" height="14"><path d="M0 6h7L3.500 1zM0 8h7l-3.500 5z" fill="#ddd" /></svg></span><span class="vsep"></span>
          <button type="button" aria-label="Time configuration"><Icon name="clock" :size="19" /></button>
        </div>
      </div>
      <button type="button" class="raised setkey" aria-label="Set keys"><Icon name="bigkey" :size="38" /></button>
      <div class="keys">
        <button type="button" class="raised">Auto</button><span class="combo"><select aria-label="Key target"><option>Selected</option></select><i></i></span>
        <button type="button" class="raised">Set K.</button><div class="krow"><span class="fly"><Icon name="tangent" :size="22" /></span><button type="button" class="raised">Filters...</button></div>
      </div>
      <div class="nav"><button v-for="n in navIcons" :key="n" type="button" :class="{ fly: navFly.includes(n) }" :aria-label="n"><Icon :name="n" :size="19" /></button></div>
    </div>

    <footer class="taskbar">
      <button type="button" class="win" aria-label="Start menu"><svg width="20" height="20"><path d="M0 3l8-1v7H0zM9 2l11-2v9H9zM0 10h8v8l-8-1zM9 10h11v10L9 18z" fill="#fff" /></svg></button>
      <label class="search">
        <svg width="22" height="22"><circle cx="13" cy="8" r="7" fill="none" stroke="#eee" stroke-width="1.500" /><path d="M8 13l-7 8" stroke="#eee" stroke-width="1.500" /></svg>
        <input type="text" placeholder="찾기" />
        <svg class="scene" width="98" height="46" viewBox="0 0 98 46">
          <path d="M4 19c0-5 5-5 6-3 2-5 8-2 7 1 3 0 3 4 2 5H5c-2 0-2-2-1-3zM28 13c-1-5 3-7 6-5 2-6 11-5 12 0 5-1 6 6 3 8H31c-3 0-4-2-3-3z" fill="#edc8ce" />
          <path d="M0 46c0-10 12-14 34-11v11z" fill="#4db8e2" /><path d="M24 36c6-14 28-13 60-14v24H30z" fill="#5f8f3c" /><path d="M24 40c0-14 16-14 18 0z" fill="#927a2e" /><path d="M24 33h16M23 37h18" stroke="#5d4a18" /><path d="M20 36c14-3 26 2 28 10H34c0-5-6-8-14-10z" fill="#e6b76c" />
          <path d="M42 28h8v14h-8z" fill="#e59a8c" /><path d="M50 24h10v18H50z" fill="#d4aad4" /><path d="M46 34h6v12h-6zM58 32h9v14h-9z" fill="#b04a55" /><path d="M61 24h8v10h-8z" fill="#d98a54" /><path d="M86 20h12v20H86z" fill="#6b4d32" />
          <path d="M73 12c0-5 12-5 12 0l1 28H73z" fill="#d4a94e" /><path d="M72 12c1-6 12-6 14 0z" fill="#737ba0" /><path d="M79 0l2 7h-4z" fill="#b07f55" /><path d="M76 16h3v5h-3zM81 16h3v5h-3z" fill="#51381f" />
          <path d="M70 36c8-3 10 0 11 3-1-8 2-12 5-14 3 4 3 8 2 12 2-6 6-8 10-8v17H74z" fill="#d1348c" /><path d="M66 44c6-4 14-3 16 2H68z" fill="#a01d6e" />
        </svg>
      </label>
      <button type="button" class="taskview" aria-label="Task view"><svg width="22" height="22"><path d="M2 1v4h12V1M2 21v-4h12v4M2 8h12v6H2zM19 1v5M19 12v9" fill="none" stroke="#fff" stroke-width="1.500" /><path d="M18 7h3v3h-3z" fill="#fff" /></svg></button>
      <nav class="apps">
        <button v-for="a in pinned" :key="a" type="button" :aria-label="a" :class="[a, { running: running.includes(a) }]"><svg width="30" height="30" viewBox="0 0 30 30" v-html="appIcons[a]"></svg></button>
      </nav>
      <div class="tray">
        <svg width="32" height="32" viewBox="0 0 32 32"><path d="M12 1c8 2 7 15-6 14 5-2 8-8 6-14Z" fill="#f5a528" /><path d="M2 10l8 5-6 3z" fill="#f5a528" /><circle cx="26" cy="5" r="4" fill="#c6281f" /><path d="M7 30c-8-1-6-11 1-11 1-8 13-9 15-2 8-1 9 12 2 13Z" fill="#b7d0f5" /></svg>
        <span class="temp">-2°C</span>
        <div class="sys">
          <svg viewBox="0 0 22 22"><path d="M3 15l8-8 8 8" /></svg>
          <svg viewBox="0 0 22 22"><path d="M2 8h3l5-4v14l-5-4H2zM13 8q2 3 0 6M16 6q4 5 0 10M19 4q5 7 0 14" /></svg>
          <svg viewBox="0 0 22 22"><rect x="5" y="6" width="10" height="10" rx="2" /><path d="M15 10l4-3v8l-4-3M6 3q4-3 8 0M6 19q4 3 8 0" /></svg>
          <svg viewBox="0 0 22 22"><path class="solid" d="M3 17c-4-3-1-8 3-7 3-6 10-5 11 0 5 0 5 6 1 7z" /></svg>
          <svg viewBox="0 0 22 22"><path d="M2 6h17v11H2z" /><path class="solid" d="M4 8h3v7H4zM20 9h2v5h-2z" /></svg>
          <svg viewBox="0 0 22 22"><path d="M3 19Q4 5 18 4M7 19Q8 9 18 8M11 19q1-6 7-7M15 19q0-2 3-3" /></svg>
          <svg viewBox="0 0 22 22"><circle class="off" cx="11" cy="11" r="10" /><path class="cross" d="M7 7l8 8M15 7l-8 8" /></svg>
        </div>
        <span class="ime">한</span>
        <div class="clock"><span>오후 10:23</span><span>2023-02-01</span></div>
        <button type="button" class="note" aria-label="Notifications">
          <svg width="32" height="32" viewBox="0 0 32 32"><path d="M1 1h20v17H9l-4 4v-4H1Z" fill="#fff" /><path d="M4 6h14M4 10h14M4 14h10" stroke="#15173a" stroke-width="1.500" /><circle cx="21" cy="21" r="10" fill="#33343f" stroke="#999" /><text x="21" y="27" text-anchor="middle" font-size="16" fill="#fff" font-family="Noto Sans, sans-serif">1</text></svg>
        </button>
      </div>
    </footer>

    <div class="toast">
      <span class="blob"></span><span>HelloWorld</span>
      <svg class="wc" width="136" height="16"><path d="M0 8h12M60 4h8v9h-8zM62 4V1h8v9h-2M119 1l11 13M130 1l-11 13" fill="none" stroke="#ccc" /></svg>
    </div>
  </div>
</template>

<style>
body { background: #444; }
</style>

<style scoped>
* { box-sizing: border-box; }
.app { position: relative; min-height: 100vh; display: flex; flex-direction: column; background: #444; color: #e4e4e4; font: 13px/16px "DejaVu Sans Condensed", "Noto Sans", "Noto Sans CJK KR", sans-serif; overflow: hidden; }
button { background: none; border: 0; padding: 0; margin: 0; color: inherit; font: inherit; display: flex; align-items: center; justify-content: center; }
input, select { font: inherit; color: inherit; border-radius: 0; outline: 0; min-width: 0; }
h1, h2, p, hr { margin: 0; font: inherit; }
.titlebar { height: 29px; background: #fff; color: #000; display: flex; align-items: center; gap: 6px; padding: 0 0 2px 2px; }
.titlebar h1 { font: 15px/20px "Noto Sans", sans-serif; }
.menubar { height: 28px; display: flex; justify-content: space-between; background: linear-gradient(#525252, #464646); border-bottom: 1px solid #111; font-size: 14px; color: #fff; }
.menus { display: flex; flex: 0 1 1168px; justify-content: space-between; padding: 0 0 2px 12px; margin-right: auto; }
.menus button { white-space: pre; }
.menus u { text-underline-offset: 2px; }
.user { width: 150px; background: #d0d0d0; color: #000; display: flex; align-items: center; gap: 4px; padding: 0 6px 0 2px; }
.user select { flex: 1; appearance: none; border: 0; background: none; padding: 0; font: 16px/20px "Noto Sans CJK KR", sans-serif; }
.workspace { width: 280px; display: flex; align-items: center; gap: 6px; padding: 0 2px 0 35px; }
.workspace .combo { flex: 1; height: 24px; }
.combo { position: relative; display: flex; height: 22px; background: #636363; }
.combo select { width: 100%; appearance: none; background: none; border: 0; padding: 0 16px 0 7px; font-size: 13px; color: #dcdcdc; }
.combo i { position: absolute; right: 9px; top: 50%; margin-top: -4px; border: 4px solid transparent; border-top: 7px solid #e6e6e6; border-bottom: 0; pointer-events: none; }
.grip { flex: none; background: repeating-conic-gradient(#aaa 0 25%, transparent 0 50%) 0 0 / 3px 3px; opacity: .8; }
.grip.tall { width: 4px; margin: 4px 0; }
.grip.wide { height: 4px; }
.toolbar { height: 40px; display: flex; border-bottom: 1px solid #363636; }
.toolbar > .grip:first-child { margin-left: 2px; margin-right: 5px; }
.tools { display: flex; align-items: center; }
.sep { width: 7px; height: 20px; background: linear-gradient(#111, #111) center / 1px 100% no-repeat; }
.tool { width: 40px; height: 38px; position: relative; }
.tool.on::before { content: ""; position: absolute; inset: 1px; background: #5f8bc6; border-radius: 4px; }
.tool.on svg { position: relative; }
.fly { position: relative; }
.fly::after { content: ""; position: absolute; right: 1px; bottom: 1px; width: 6px; height: 6px; background: linear-gradient(135deg, transparent 50%, #ddd 50%); }
.tools .combo { margin: 0 1px 9px; flex: none; }
.partial { width: 17px; height: 38px; justify-content: flex-start; overflow: hidden; }
.toolbar > .grip { margin-left: 3px; }
.combo.path { flex: 1; height: 36px; margin: 2px 0 0 5px; }
.path select { padding-right: 26px; }
.more { width: 40px; }
.brush { width: 44px; }
.ribbon { height: 48px; display: flex; border-bottom: 1px solid #2e2e2e; }
.ribbon > .grip { margin: 2px 5px 2px 2px; }
.ribbon-body { flex: 1; display: flex; flex-direction: column; }
.tabs { height: 25px; background: #515151; border-bottom: 1px solid #2c2c2c; border-top: 1px solid #6a6a6a; border-left: 1px solid #666; display: grid; grid-template-columns: 136px 77px 150px 148px 127px 1fr; font-size: 15px; color: #a5a5a5; }
.tabs button { padding-top: 2px; }
.tabs button:nth-child(3) { padding-left: 22px; }
.tabs .active { background: linear-gradient(#686868, #5c5c5c); color: #dedede; border: 1px solid #222; border-bottom: 0; border-radius: 4px 4px 0 0; }
.tabs .minimize { justify-content: flex-start; padding-left: 8px; }
.panels { flex: 1; display: flex; gap: 1px; padding-left: 2px; background: linear-gradient(#484848, #393939); font-size: 15px; color: #dcdcdc; }
.panels button { width: 103px; padding-top: 1px; background: #434343; border: 1px solid #5c5c5c; white-space: nowrap; }
.panels button + button { width: 109px; }

main { flex: 1; display: flex; padding-top: 6px; min-height: 0; }
.strip { width: 50px; display: flex; flex-direction: column; }
.strip .grip { margin: 2px 3px 6px 2px; }
.strip-body { flex: 1; background: linear-gradient(90deg, #313131, #2b2b2b); border-right: 1px solid #000; display: flex; flex-direction: column; justify-content: flex-end; gap: 13px; padding-bottom: 3px; }
.expand { width: 24px; height: 24px; margin-left: 12px; padding-left: 2px; background: #525252; border: 1px solid #222; border-radius: 4px; }
.layout { height: 55px; margin-left: 5px; display: grid; grid-template-columns: 18px 18px; grid-auto-rows: 16px; gap: 2px; place-content: center; align-items: stretch; background: linear-gradient(#46607e, #3f82d9); border-radius: 4px 0 0 4px; }
.layout i { background: #5d6878; border: 1px solid #222c3a; border-radius: 1px; }
.blue { background: #5f8bc6; }
.explorer { width: 317px; margin-right: 6px; padding-left: 5px; display: flex; flex-direction: column; font-size: 15px; line-height: 20px; color: #fff; }
.explorer > .grip { margin: 2px 0 7px 2px; }
.ex-menu { height: 25px; display: flex; gap: 20px; padding: 0 0 0 16px; }
.ex-search { height: 34px; display: flex; align-items: center; padding-left: 4px; }
.ex-search input { width: 188px; height: 27px; background: #424242; border: 1px solid #676767; }
.ex-search .clear { width: 31px; padding-right: 4px; }
.ex-search .blue, .ex-foot .blue { width: 30px; height: 30px; }
.vline { width: 2px; height: 29px; background: #777; border-left: 1px solid #222; margin: 0 2px; }
.ex-search .lock { width: 29px; }
.chev { margin-left: auto; color: #57579d; font-size: 20px; line-height: 20px; padding-bottom: 22px; }
.ex-body { flex: 1; display: flex; gap: 3px; }
.ex-tools { width: 23px; display: flex; flex-direction: column; gap: 3px; padding-top: 4px; }
.ex-tools button { height: 24px; }
.ex-tools hr { width: 19px; height: 2px; margin: 1px 2px 0; border: 0; border-top: 1px solid #222; background: #777; }
.ex-list { flex: 1; border: 1px solid #383838; border-top: 0; }
table { width: 100%; border-collapse: collapse; table-layout: fixed; }
.c-frozen { width: 63px; }
th, td { padding: 0; font-weight: normal; text-align: left; height: 22px; }
th { height: 24px; border: 1px solid #5e5e5e; }
.th { display: flex; align-items: center; justify-content: space-between; padding: 0 1px 0 2px; height: 22px; white-space: nowrap; }
.node { display: flex; height: 22px; align-items: center; }
.twig { width: 9px; height: 22px; margin: 0 0 0 9px; border-left: 1px dotted #777; background: linear-gradient(#666, #666) 0 50% / 7px 1px no-repeat; }
tr:last-child .twig { height: 11px; align-self: flex-start; background-position: 0 100%; }
.node svg { margin: 0 1px 3px 0; }
.name { flex: 1; height: 22px; background: #4e4e4e; padding-left: 4px; line-height: 23px; }
.frozen { border-left: 1px solid #5a5a5a; background: #4e4e4e; }
.frozen div { display: flex; justify-content: center; }
tr:nth-child(even) .name, tr:nth-child(even) .frozen { background: #595959; }
.ex-foot { height: 33px; display: flex; align-items: center; padding: 0 0 1px 4px; }
.ex-foot input { width: 182px; height: 27px; background: #424242; border: 1px solid #676767; color: #ff0; padding: 0 2px; }
.ex-foot .caret { margin: 0 4px 0 5px; }
.plain { width: 29px; }

.viewports { flex: 1; min-width: 0; display: grid; grid-template-columns: 954fr 336fr; grid-template-rows: 584fr 145fr; gap: 4px; }
.viewport { position: relative; overflow: hidden; background: #343434; border: 2px solid #313131; }
.viewport.active { border-color: #7d6a2a; }
.persp { background: linear-gradient(#1a1a1a, #363636 35%, #4b4b4b); }
.canvas { position: absolute; inset: 0; width: 100%; height: 100%; }
.vlabel { position: relative; display: flex; align-items: center; gap: 11px; padding: 5px 0 0 3px; font-size: 14px; line-height: 20px; color: #d4d4d4; white-space: nowrap; }
.viewcube { position: absolute; right: 14px; top: 14px; width: 80px; height: 80px; }
.viewcube text { text-anchor: middle; fill: #55575c; font-weight: bold; }
.viewcube .compass text { font: bold 11px "Liberation Sans", sans-serif; fill: #b9bbbd; }
.axis { position: absolute; left: 0; bottom: 20px; width: 60px; height: 60px; font-size: 14px; }

.command { width: 253px; padding: 0 3px 0 5px; display: flex; flex-direction: column; }
.command > .grip { margin: 2px 0 6px 3px; }
.cmd-tabs { height: 34px; display: flex; background: #3a3a3a; }
.cmd-tabs button { width: 40px; border-right: 1px solid #303030; }
.cmd-tabs .active { background: #444; border: 0; width: 39px; }
.cats { display: flex; gap: 2px; padding: 6px 0 6px 3px; }
.cats button { width: 28px; height: 28px; border-radius: 4px; }
.command .prim { height: 25px; margin-left: 3px; }
.prim select { color: #e0e0e0; }
.rolls { flex: 1; display: flex; gap: 3px; padding: 6px 0 0 3px; }
.roll-col { flex: 1; display: flex; flex-direction: column; gap: 5px; }
.scroll { width: 8px; background: #3c3c3c; border-radius: 4px; }
.roll { background: #505050; border: 1px solid #454545; border-radius: 4px; padding: 0 6px 6px; }
.roll h2 { display: flex; align-items: center; gap: 9px; height: 24px; font-weight: bold; color: #fff; padding-right: 3px; }
.dots { width: 8px; height: 8px; margin-left: auto; background: repeating-conic-gradient(#888 0 25%, transparent 0 50%) 0 0 / 2px 2px; }
.autogrid { display: flex; align-items: center; justify-content: center; gap: 6px; height: 32px; color: #8c8c8c; }
.autogrid input { appearance: none; width: 15px; height: 15px; margin: 0; background: #575757; border: 1px solid #484848; }
.prims { display: grid; grid-template-columns: 1fr 1fr; gap: 5px; padding-top: 1px; }
.prims button { height: 25px; background: #636363; border: 1px solid #494949; border-radius: 4px; }
.namecolor { display: flex; gap: 5px; padding-top: 2px; }
.namecolor input { flex: 1; height: 26px; background: #595959; border: 1px solid #484848; }
.namecolor button { width: 24px; height: 24px; background: #c42f80; border: 1px solid #000; }

.timeline { height: 78px; display: flex; }
.timeline > .grip { margin: 7px 5px 2px 2px; }
.tl-body { flex: 1; }
.slider { height: 32px; display: flex; align-items: flex-end; gap: 2px; padding: 0 0 5px 1px; }
.slider button { width: 18px; height: 20px; background: #616161; border-radius: 4px; }
.slider .thumb { width: 154px; }
.track-row { border-top: 1px solid #0c0c0c; display: flex; height: 46px; padding-right: 62px; }
.mini { width: 62px; padding-right: 10px; height: 30px; }
.track { flex: 1; background: linear-gradient(#424242, #424242) 0 30px / 100% 1px no-repeat #2a2a2a; padding: 0 7px; }
.ticks { display: flex; justify-content: space-between; color: #c0c0c0; line-height: 14px; }
.tick { width: 0; display: flex; flex-direction: column; align-items: center; }
.tick b { width: 1px; height: 14px; background: #6a6a6a; }
.tick .tail { height: 2px; }
.tick.zero { position: relative; color: #e6dc6a; }
.tick.zero::before { content: ""; position: absolute; left: -5px; top: 1px; width: 10px; height: 29px; background: #857a1c; }
.tick.zero > * { position: relative; }

.status { height: 68px; display: flex; padding: 4px 12px 4px 4px; }
.listener { width: 123px; display: flex; flex-direction: column; padding-top: 1px; }
.listener input { height: 29px; border: 2px inset #aaa; background: #fff; color: #808080; padding: 0 3px 6px; font: 13px/16px "DejaVu Sans Mono", monospace; }
.listener .pink { background: #dcc3c4; }
.bar { width: 4px; margin: -1px 4px 0 2px; border-left: 1px solid #222; border-right: 2px solid #000; }
.prompt { flex: 1; padding-top: 9px; display: flex; flex-direction: column; gap: 15px; color: #fff; white-space: nowrap; }
.coords { width: 491px; color: #fff; }
.crow { height: 31px; padding-top: 2px; display: flex; align-items: center; white-space: nowrap; }
.crow > svg:nth-child(1) { margin-right: 13px; }
.crow > svg:nth-child(2) { margin-right: 14px; }
.crow > svg:nth-child(3) { margin-right: 9px; }
.crow label { display: flex; align-items: center; margin-right: 13px; }
.crow label span { width: 17px; }
.crow label input { width: 73px; height: 23px; background: #595959; border: 1px solid #505050; color: #919191; padding: 0 4px; }
.crow .grid { padding-left: 3px; }
.crow.second { justify-content: flex-end; gap: 7px; }
.vsep { width: 1px; height: 20px; background: #111; }
.sq { width: 24px; height: 25px; background: #636363; border-radius: 4px; }
.green { width: 11px; height: 11px; border-radius: 50%; background: #52dc46; }
.crow.second > svg { margin: 0 6px 0 4px; }
.tag { color: #d8d8d8; }
.playback { width: 140px; margin-left: 54px; }
.prow { height: 27px; display: flex; align-items: center; justify-content: space-between; padding-top: 2px; }
.playback .fly::after { right: -7px; bottom: -4px; }
.frame { width: 86px; height: 21px; background: #636363; display: flex; align-items: center; padding: 0 4px; }
.frame input { flex: 1; border: 0; background: none; padding: 0; }
.raised { background: #616161; border-radius: 4px; border: 1px solid #505050; color: #e0e0e0; }
.setkey { width: 54px; height: 55px; margin: 3px 4px 0 18px; }
.keys { width: 206px; margin-right: 10px; display: grid; grid-template-columns: 59px 1fr; grid-template-rows: 26px 26px; gap: 1px 4px; padding-top: 3px; }
.keys .combo { height: 23px; }
.krow { display: flex; justify-content: space-between; align-items: center; padding-left: 2px; }
.krow .raised { width: 111px; height: 26px; margin-right: 2px; }
.krow .fly::after { right: -2px; bottom: -2px; }
.nav { width: 114px; display: grid; grid-template-columns: repeat(4, 1fr); grid-template-rows: 27px 27px; padding-top: 2px; margin-left: 1px; }

.taskbar { height: 50px; display: flex; color: #fff; background: linear-gradient(90deg, #13131d, #15151f 34%, #23384a 43%, #1c3350 50%, #14244a 56%, #14172b 62%, #151b30 68%, #15233f 75%, #242c4c 83%, #302843 88%, #1a1c44 95%, #13153a); }
.win { width: 60px; }
.search { width: 360px; display: flex; align-items: center; background: #333; border: 1px solid #5c5c5c; padding-left: 14px; }
.search input { flex: 1; width: 0; border: 0; background: none; padding: 0 0 0 14px; font: 20px/28px "Noto Sans CJK KR", sans-serif; }
.search input::placeholder { color: #e2e2e2; opacity: 1; }
.search .scene { align-self: flex-end; }
.taskview { width: 60px; margin-right: 4px; }
.apps { display: flex; flex: 1; }
.apps button { width: 60px; position: relative; }
.apps .running::after { content: ""; position: absolute; left: 5px; right: 5px; bottom: 0; height: 3px; background: #76b9ed; }
.apps .sticky { background: #a5602d; }
.apps .sticky.running::after { left: 0; right: 0; background: #ff7a00; }
.apps .max { background: #454b5e; }
.apps .max.running::after { left: 0; right: 0; }
.tray { display: flex; align-items: center; }
.temp { font: 18px/24px "Noto Sans", sans-serif; margin: 4px 17px 0 9px; }
.sys { display: flex; gap: 8px; }
.sys svg { width: 22px; height: 22px; fill: none; stroke: #fff; stroke-width: 1.3; }
.sys .solid { fill: #eee; stroke: none; }
.sys .off { fill: #8d8d99; stroke: none; }
.sys .cross { stroke: #15151f; stroke-width: 2; }
.ime { width: 20px; height: 20px; margin: 0 21px 0 14px; background: #fff; color: #000; font: 17px/18px "Noto Sans CJK KR", sans-serif; text-align: center; }
.clock { width: 76px; display: flex; flex-direction: column; align-items: center; font: 15px/23px "Noto Sans", "Noto Sans CJK KR", sans-serif; white-space: nowrap; }
.note { margin: 4px 5px 0 22px; padding-right: 14px; border-right: 1px solid #666880; height: 50px; }

.toast { position: absolute; top: 0; right: 0; width: 250px; height: 47px; display: flex; align-items: center; gap: 10px; padding: 0 0 3px 15px; background: rgba(255, 255, 255, .82); border-radius: 0 0 0 4px; box-shadow: 0 1px 5px rgba(0, 0, 0, .4); color: #333; font: 15px/20px "Noto Sans", sans-serif; }
.blob { width: 25px; height: 25px; border-radius: 9px; background: linear-gradient(#74b3a9 70%, #4d9187 70%); }
.wc { position: absolute; left: 95px; top: 7px; }
</style>
